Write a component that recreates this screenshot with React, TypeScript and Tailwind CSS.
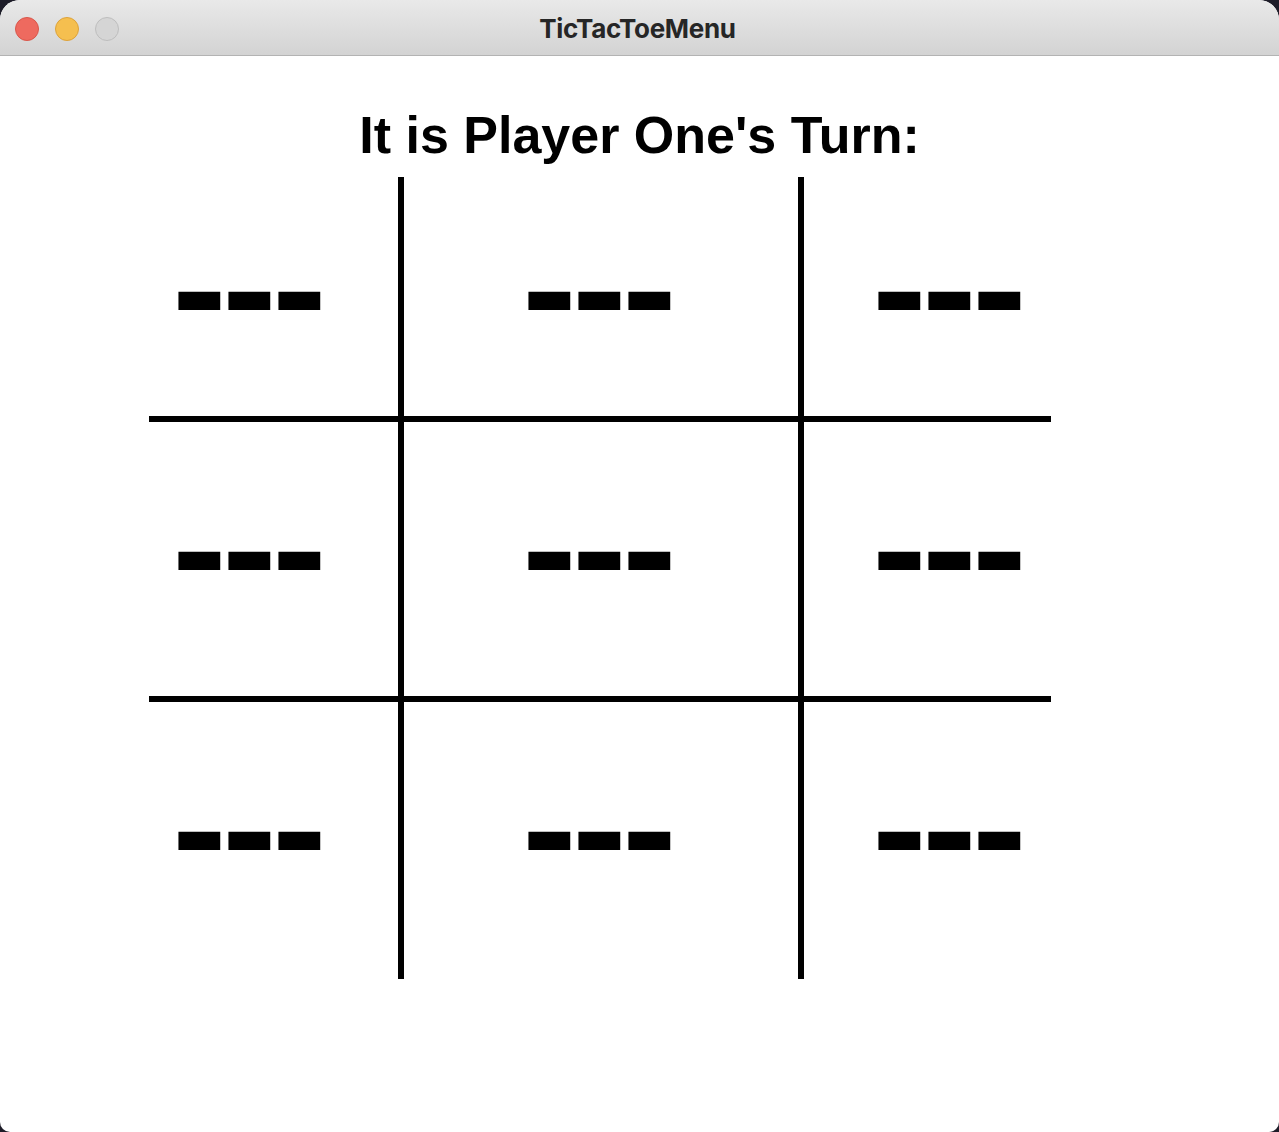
const cells = [
  { cls: 'border-b-[6px] pl-[29px] pt-[114px]' },
  { cls: 'border-x-[6px] border-b-[6px] pl-[124px] pt-[114px]' },
  { cls: 'border-b-[6px] pl-[74px] pt-[114px]' },
  { cls: 'pl-[29px] pt-[129px]' },
  { cls: 'border-x-[6px] pl-[124px] pt-[129px]' },
  { cls: 'pl-[74px] pt-[129px]' },
  { cls: 'border-t-[6px] pl-[29px] pt-[129px]' },
  { cls: 'border-x-[6px] border-t-[6px] pl-[124px] pt-[129px]' },
  { cls: 'border-t-[6px] pl-[74px] pt-[129px]' },
];

function Blank() {
  return (
    <div className="flex h-[20px] w-[142px] items-center">
      <span className="ml-[-6.3px] origin-left -translate-y-[14px] scale-x-[1.083] whitespace-nowrap font-['Liberation_Sans',Arial,sans-serif] text-[152px] font-bold leading-none tracking-[-4.4px] text-black">
        ---
      </span>
    </div>
  );
}

function TrafficLights() {
  return (
    <div className="flex gap-[16px] pl-[15px]">
      <span className="h-[24px] w-[24px] rounded-full border border-[#d8574b] bg-[#ee6a5f]" />
      <span className="h-[24px] w-[24px] rounded-full border border-[#dca23b] bg-[#f5bf4f]" />
      <span className="h-[24px] w-[24px] rounded-full border border-[#bdbdbd] bg-[#d5d5d5]" />
    </div>
  );
}

export default function App() {
  return (
    <div className="h-[1132px] w-[1279px] bg-[#1d1c28]">
      <div className="flex h-full flex-col overflow-hidden rounded-t-[20px] rounded-b-[10px] bg-white">
        <div className="grid h-[56px] shrink-0 grid-cols-[1fr_auto_1fr] items-center border-b border-[#b3b3b3] bg-gradient-to-b from-[#e9e9e9] to-[#d3d3d3] pt-[2px]">
          <TrafficLights />
          <div className="mr-[4px] font-['Inter',sans-serif] text-[26px] font-bold tracking-[-0.3px] text-[#262626]">TicTacToeMenu</div>
          <div />
        </div>

        <div className="flex-1">
          <h1 className="mt-[53px] text-center font-['Liberation_Sans',Arial,sans-serif] text-[52px] font-bold leading-none text-black">
            It is Player One's Turn:
          </h1>
          <div className="ml-[149px] mt-[16px] grid w-fit grid-cols-[249px_406px_247px] grid-rows-[245px_274px_283px]">
            {cells.map((c, i) => (
              <div key={i} className={`border-black ${c.cls}`}>
                <Blank />
              </div>
            ))}
          </div>
        </div>
      </div>
    </div>
  );
}
